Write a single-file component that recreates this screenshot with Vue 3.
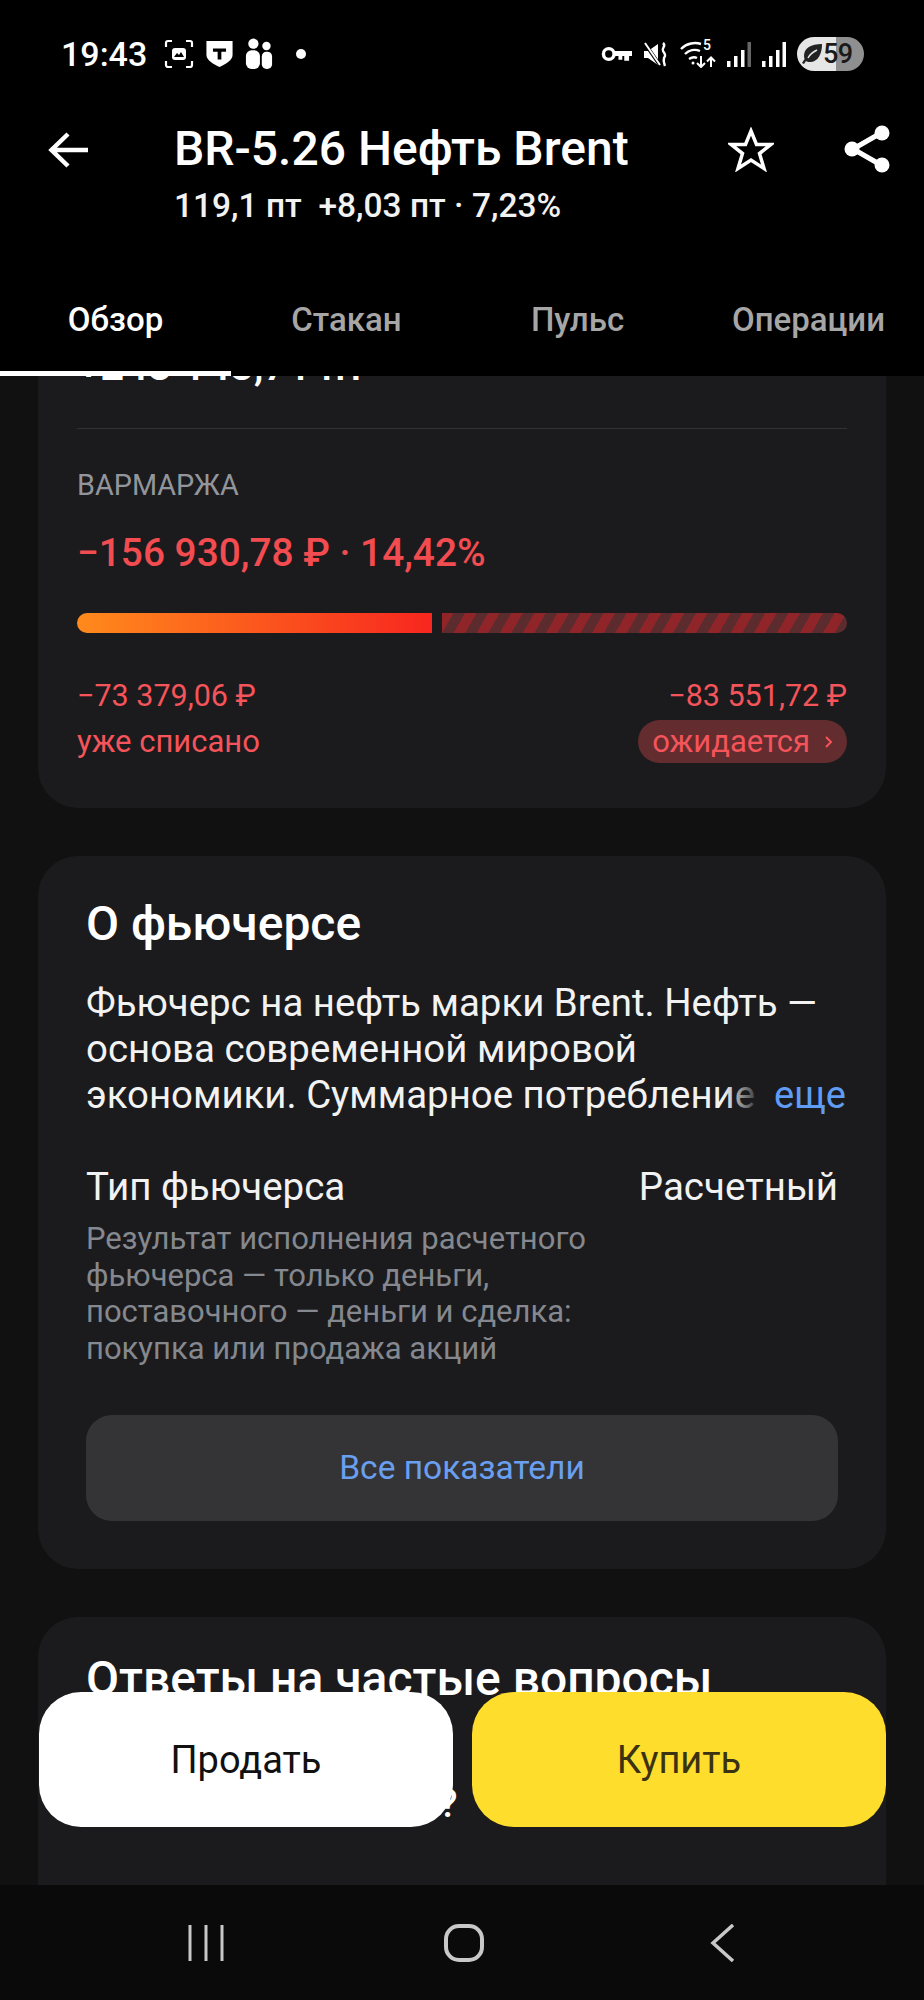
<script setup>
const tabs = [
  { name: 'Обзор', active: true },
  { name: 'Стакан' },
  { name: 'Пульс' },
  { name: 'Операции' },
];
</script>

<template>
  <div class="screen">
    <header class="top">
      <div class="status">
        <div class="status-left">
          <span class="time">19:43</span>
          <svg class="ic-scan" width="30" height="30" viewBox="0 0 30 30" fill="none" stroke="#fff" stroke-width="2.200">
            <path d="M2 8V4a2 2 0 0 1 2-2h4M22 2h4a2 2 0 0 1 2 2v4M28 22v4a2 2 0 0 1-2 2h-4M8 28H4a2 2 0 0 1-2-2v-4" />
            <rect x="8" y="9" width="14" height="12" rx="3" fill="#fff" stroke="none" />
            <path d="M10 18l3-4 2 2 2-3 3 5z" fill="#000" stroke="none" />
          </svg>
          <svg class="ic-shield" width="27" height="28" viewBox="0 0 28 30">
            <path d="M0 1h28v15c0 6-8 10-14 13C8 26 0 22 0 16z" fill="#fff" />
            <path d="M7 9h14v3.500h-5V21h-4v-8.500H7z" fill="#000" />
          </svg>
          <svg class="ic-people" width="28" height="32" viewBox="0 0 30 34" fill="#fff">
            <circle cx="9" cy="6" r="5.500" />
            <circle cx="23" cy="8.500" r="4.500" />
            <rect x="1" y="13" width="15" height="20" rx="6" />
            <rect x="18" y="14.500" width="11" height="18.500" rx="5" />
          </svg>
          <span class="dot"></span>
        </div>
        <div class="status-right">
          <svg width="31" height="16" viewBox="0 0 32 16" fill="none">
            <circle cx="8" cy="8" r="5.500" stroke="#fff" stroke-width="3.500" />
            <path d="M14 5h18v5h-3v5h-5v-5h-2v4h-4v-4h-4z" fill="#fff" />
          </svg>
          <svg width="26" height="25" viewBox="0 0 26 25" fill="none">
            <path d="M1 9h4l10-7v21L5 16H1z" fill="#fff" />
            <path d="M1 0l15 22" stroke="#000" stroke-width="3.500" />
            <path d="M2 1l15 22" stroke="#fff" stroke-width="2" />
            <path d="M20 1c4 3-2 5 0 8s3 4 1 7c-1 3 0 5 1 8" stroke="#fff" stroke-width="2.400" />
          </svg>
          <div class="net">
            <svg width="36" height="28" viewBox="0 0 36 28" fill="none" stroke="#fff" stroke-width="2.400">
              <path d="M1 9c6-6 14-7 20-5M5 14c4-4 10-5 15-3M9 19c3-2 6-2 8-1" />
              <circle cx="13" cy="23" r="1.500" fill="#fff" stroke="none" />
              <path d="M21 16v11M17 23l4 4 4-4M31 27V18M27 21.500l4-4 4 4" stroke-width="2" />
            </svg>
            <span class="net-five">5</span>
          </div>
          <svg width="24" height="25" viewBox="0 0 24 25">
            <rect x="0" y="19" width="3.500" height="6" fill="#fff" />
            <rect x="7" y="14" width="3.500" height="11" fill="#fff" />
            <rect x="14" y="8" width="3.500" height="17" fill="#fff" />
            <rect x="20.500" y="0" width="3.500" height="25" fill="#666" />
          </svg>
          <svg width="24" height="25" viewBox="0 0 24 25">
            <rect x="0" y="19" width="3.500" height="6" fill="#fff" />
            <rect x="7" y="14" width="3.500" height="11" fill="#fff" />
            <rect x="14" y="8" width="3.500" height="17" fill="#fff" />
            <rect x="20.500" y="0" width="3.500" height="25" fill="#fff" />
          </svg>
          <div class="battery">
            <svg width="22" height="22" viewBox="0 0 22 22">
              <path d="M21 1C10 1 3 5 3 13c0 1 .2 2 .6 3L1 20l2 1 2-3c1 .6 2 1 4 1 8 0 12-8 12-18z" fill="#222" />
              <path d="M7 15c2-4 5-6 9-8" stroke="#e6e6e6" stroke-width="1.500" fill="none" />
            </svg>
            <span>59</span>
          </div>
        </div>
      </div>

      <div class="title-row">
        <svg class="back" width="40" height="36" viewBox="0 0 40 36" fill="none" stroke="#fff" stroke-width="4.500">
          <path d="M40 18H4M20 2L3.500 18 20 34" />
        </svg>
        <div class="title-text">
          <h1>BR-5.26 Нефть Brent</h1>
          <p>119,1 пт&nbsp; +8,03 пт · 7,23%</p>
        </div>
        <svg class="star" width="46" height="45" viewBox="0 0 46 45" fill="none" stroke="#fff" stroke-width="3.500">
          <path d="M23 4l5.500 13.500H43L31.500 26.500l4.500 15L23 33l-13 8.500 4.500-15L3 17.500h14.500z" />
        </svg>
        <svg class="share" width="46" height="48" viewBox="0 0 46 48" fill="none">
          <path d="M37 8L9 24l28 16" stroke="#fff" stroke-width="5" />
          <circle cx="38" cy="8" r="7.500" fill="#fff" />
          <circle cx="8" cy="24" r="7.500" fill="#fff" />
          <circle cx="38" cy="40" r="7.500" fill="#fff" />
        </svg>
      </div>

      <nav class="tabs">
        <div v-for="t in tabs" :key="t.name" class="tab" :class="{ active: t.active }">{{ t.name }}</div>
      </nav>
    </header>

    <main class="content">
      <section class="card card-first">
        <div class="clipped">+243 143,71 пт</div>
        <div class="divider"></div>
        <div class="label">ВАРМАРЖА</div>
        <div class="amount">−156 930,78 ₽ · 14,42%</div>
        <div class="bar">
          <div class="bar-done"></div>
          <div class="bar-wait"></div>
        </div>
        <div class="split">
          <div class="split-col">
            <span class="val">−73 379,06 ₽</span>
            <span class="val-note">уже списано</span>
          </div>
          <div class="split-col right">
            <span class="val">−83 551,72 ₽</span>
            <span class="pill">ожидается
              <svg width="10" height="14" viewBox="0 0 10 14" fill="none" stroke="#f4545a" stroke-width="2"><path d="M2 2l5 5-5 5" /></svg>
            </span>
          </div>
        </div>
      </section>

      <section class="card card-about">
        <h2>О фьючерсе</h2>
        <div class="about-text">
          <p>Фьючерс на нефть марки Brent. Нефть —<br />основа современной мировой<br />экономики. Суммарное потребление</p>
          <span class="more">еще</span>
        </div>
        <div class="row">
          <div class="row-left">
            <div class="row-title">Тип фьючерса</div>
            <div class="row-desc">Результат исполнения расчетного<br />фьючерса — только деньги,<br />поставочного — деньги и сделка:<br />покупка или продажа акций</div>
          </div>
          <div class="row-title">Расчетный</div>
        </div>
        <button class="all">Все показатели</button>
      </section>

      <section class="card card-faq">
        <h2>Ответы на частые вопросы</h2>
        <div class="faq-q">Что такое фьючерс?</div>
      </section>
    </main>

    <div class="actions">
      <button class="act sell">Продать</button>
      <button class="act buy">Купить</button>
    </div>

    <footer class="navbar">
      <svg width="36" height="36" viewBox="0 0 36 36" stroke="#c8c8c8" stroke-width="3">
        <path d="M2 0v36M18 0v36M34 0v36" />
      </svg>
      <svg width="40" height="38" viewBox="0 0 40 38" fill="none" stroke="#c8c8c8" stroke-width="4">
        <rect x="2" y="2" width="36" height="34" rx="13" />
      </svg>
      <svg width="25" height="38" viewBox="0 0 25 38" fill="none" stroke="#c8c8c8" stroke-width="3.500">
        <path d="M23 1L3 19l20 18" />
      </svg>
    </footer>
  </div>
</template>

<style scoped>
.screen {
  position: relative;
  width: 924px;
  height: 2000px;
  display: flex;
  flex-direction: column;
  overflow: hidden;
  background: #111112;
  font-family: Roboto, "Noto Sans", sans-serif;
  color: #fff;
}

.top {
  position: relative;
  z-index: 2;
  flex: none;
  height: 376px;
  background: #000;
  display: flex;
  flex-direction: column;
}

.status {
  height: 54px;
  padding: 27px 60px 0 61px;
  display: flex;
  justify-content: space-between;
  align-items: center;
}

.status-left,
.status-right {
  display: flex;
  align-items: center;
}

.status-left {
  gap: 12px;
}

.status-right {
  gap: 11px;
}

.time {
  font-size: 34px;
  font-weight: 500;
  margin-right: 5px;
}

.dot {
  width: 10px;
  height: 10px;
  border-radius: 50%;
  background: #fff;
  margin-left: 11px;
}

.net {
  position: relative;
  width: 36px;
  height: 28px;
}

.net svg {
  display: block;
}

.net-five {
  position: absolute;
  right: 5px;
  top: -3px;
  font-size: 14px;
  line-height: 16px;
  font-weight: 500;
}

.battery {
  width: 67px;
  height: 34px;
  border-radius: 17px;
  background: linear-gradient(90deg, #e6e6e6 0 58%, #8f8f8f 58%);
  display: flex;
  align-items: center;
  padding-left: 4px;
  box-sizing: border-box;
  color: #1a1a1a;
  font-size: 27px;
  font-weight: 500;
  letter-spacing: -0.500px;
}

.title-row {
  display: flex;
  align-items: flex-start;
  padding-top: 40px;
}

.back {
  flex: none;
  margin: 11px 0 0 48px;
}

.title-text {
  margin-left: 86px;
  flex: 1;
  white-space: nowrap;
}

h1 {
  margin: 0;
  font-size: 48px;
  line-height: 56px;
  font-weight: 500;
}

.title-text p {
  margin: 9px 0 0;
  font-size: 33.500px;
  line-height: 40px;
  font-weight: 500;
  color: #f2f2f2;
}

.star {
  flex: none;
  margin: 6px 0 0;
}

.share {
  flex: none;
  margin: 4px 34px 0 70px;
}

.tabs {
  margin-top: auto;
  height: 90px;
  display: grid;
  grid-template-columns: repeat(4, 1fr);
}

.tab {
  display: flex;
  justify-content: center;
  padding-top: 14px;
  font-size: 33px;
  line-height: 40px;
  font-weight: 500;
  color: #a6a6a6;
  box-sizing: border-box;
  white-space: nowrap;
}

.tab.active {
  color: #fff;
  border-bottom: 5px solid #fff;
}

.content {
  flex: 1;
  min-height: 0;
  overflow: hidden;
  padding: 0 38px;
  display: flex;
  flex-direction: column;
  gap: 48px;
}

.card {
  flex: none;
  background: #1b1b1d;
  border-radius: 40px;
  box-sizing: border-box;
}

.card-first {
  margin-top: -40px;
  height: 472px;
  padding: 0 39px;
  display: flex;
  flex-direction: column;
}

.clipped {
  font-size: 42px;
  font-weight: 500;
  line-height: 48px;
  height: 48px;
  margin-top: 6px;
}

.divider {
  height: 1px;
  background: #323235;
  margin-top: 38px;
}

.label {
  margin-top: 40px;
  font-size: 28.800px;
  line-height: 32px;
  color: #92969c;
}

.amount {
  margin-top: 30px;
  font-size: 38.800px;
  line-height: 44px;
  font-weight: 500;
  color: #f34c50;
}

.bar {
  margin-top: 38px;
  height: 20px;
  display: flex;
  gap: 10px;
}

.bar-done {
  width: 355px;
  border-radius: 10px 0 0 10px;
  background: linear-gradient(90deg, #ff8a1c, #f8261f);
}

.bar-wait {
  flex: 1;
  border-radius: 0 10px 10px 0;
  background: repeating-linear-gradient(120deg, #8f2529 0 10px, #5c2b2d 10px 20px);
}

.split {
  margin-top: 45px;
  display: flex;
  justify-content: space-between;
}

.split-col {
  display: flex;
  flex-direction: column;
  align-items: flex-start;
  gap: 6px;
}

.split-col.right {
  align-items: flex-end;
}

.val {
  font-size: 30.500px;
  line-height: 36px;
  color: #f4545a;
}

.val-note {
  font-size: 31px;
  line-height: 43px;
  color: #f4545a;
}

.pill {
  height: 43px;
  padding: 0 13px 0 14px;
  border-radius: 22px;
  background: #632c2f;
  display: flex;
  align-items: center;
  gap: 14px;
  font-size: 31px;
  color: #f4545a;
}

.card-about {
  height: 713px;
  padding: 40px 48px 0 48px;
}

h2 {
  margin: 0;
  font-size: 48px;
  line-height: 56px;
  font-weight: 500;
}

.about-text {
  position: relative;
  margin-top: 28px;
}

.about-text p {
  margin: 0;
  font-size: 38.400px;
  line-height: 46px;
  color: #f2f2f2;
  white-space: nowrap;
}

.more {
  position: absolute;
  right: -8px;
  bottom: 0;
  padding-left: 50px;
  background: linear-gradient(90deg, transparent, #1b1b1d 38px);
  font-size: 38px;
  line-height: 46px;
  color: #5f9cf5;
}

.row {
  margin-top: 47px;
  display: flex;
  justify-content: space-between;
}

.row-title {
  font-size: 38.500px;
  line-height: 44px;
  color: #f2f2f2;
}

.row-desc {
  margin-top: 12px;
  font-size: 31px;
  line-height: 36.700px;
  color: #85888e;
}

.all {
  display: block;
  width: 100%;
  height: 106px;
  margin-top: 47px;
  border: 0;
  border-radius: 26px;
  background: #343436;
  font-family: inherit;
  font-size: 33.500px;
  color: #6a9ff0;
}

.card-faq {
  height: 400px;
  padding: 34px 48px 0 48px;
}

.faq-q {
  margin-top: 75px;
  font-size: 38.500px;
  line-height: 44px;
  font-weight: 500;
  white-space: nowrap;
}

.actions {
  position: absolute;
  z-index: 3;
  left: 39px;
  right: 38px;
  top: 1692px;
  display: flex;
  gap: 19px;
}

.act {
  flex: 1;
  height: 135px;
  border: 0;
  border-radius: 42px;
  font-family: inherit;
  font-size: 38px;
  color: #111;
}

.sell {
  background: #fff;
}

.buy {
  background: #ffdd2d;
  color: #3a3210;
}

.navbar {
  flex: none;
  position: relative;
  z-index: 2;
  height: 115px;
  background: #0a0a0a;
  display: flex;
  align-items: center;
  padding-left: 188px;
  gap: 220px;
  box-sizing: border-box;
}

.navbar svg:last-child {
  margin-left: 6px;
}
</style>
